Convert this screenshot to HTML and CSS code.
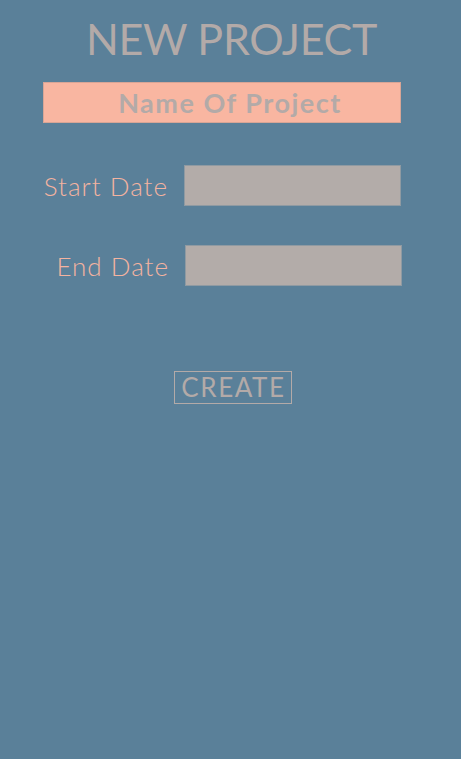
FILE: index.html
```html
<!DOCTYPE html>
<html>
<head>
<meta charset="utf-8">
<link rel="stylesheet" href="styles.css">
</head>
<body>
<main class="page">
  <h1 class="title">NEW PROJECT</h1>
  <div class="name-box">Name Of Project</div>
  <div class="rows">
    <div class="row row-start">
      <span class="label">Start Date</span>
      <div class="field"></div>
    </div>
    <div class="row row-end">
      <span class="label">End Date</span>
      <div class="field"></div>
    </div>
  </div>
  <div class="actions">
    <button class="create">CREATE</button>
  </div>
</main>
</body>
</html>
```
FILE: styles.css
```css
html, body {
  margin: 0;
  padding: 0;
  background: #5a8099;
  width: 461px;
  height: 759px;
  overflow: hidden;
}
.page {
  font-family: Lato, "Liberation Sans", sans-serif;
  padding-top: 14px;
}
.title {
  margin: 0;
  text-align: center;
  font-weight: 400;
  font-size: 43px;
  line-height: 50px;
  color: #b3aaa8;
  padding-left: 2px;
  letter-spacing: -0.3px;
}
.name-box {
  margin: 18px 0 0 43px;
  width: 358px;
  height: 41px;
  box-sizing: border-box;
  padding-left: 16px;
  background: #f9b6a1;
  border: 1px solid #d8a596;
  color: #b3aaa8;
  font-weight: 700;
  font-size: 27px;
  letter-spacing: 1.5px;
  line-height: 39px;
  text-align: center;
}
.rows {
  margin-left: 43px;
  width: 359px;
  margin-top: 42px;
  display: flex;
  flex-direction: column;
  gap: 39px;
}
.row {
  display: flex;
  align-items: center;
  justify-content: flex-end;
  gap: 16px;
}
.row-start { padding-right: 1px; }
.label {
  color: #f4b3a0;
  font-weight: 300;
  font-size: 26px;
  letter-spacing: 1px;
}
.field {
  width: 215px;
  height: 39px;
  background: #b3aca9;
  border: 1px solid #8f9aa2;
}
.actions {
  margin-top: 85px;
  display: flex;
  justify-content: center;
  padding-left: 4px;
}
.create {
  font-family: Lato, "Liberation Sans", sans-serif;
  font-weight: 400;
  font-size: 26px;
  letter-spacing: 1.6px;
  color: #b3aaa8;
  background: transparent;
  border: 1px solid #b3aaa8;
  width: 118px;
  height: 33px;
  padding: 0 0 0 2px;
  line-height: 31px;
}
```
